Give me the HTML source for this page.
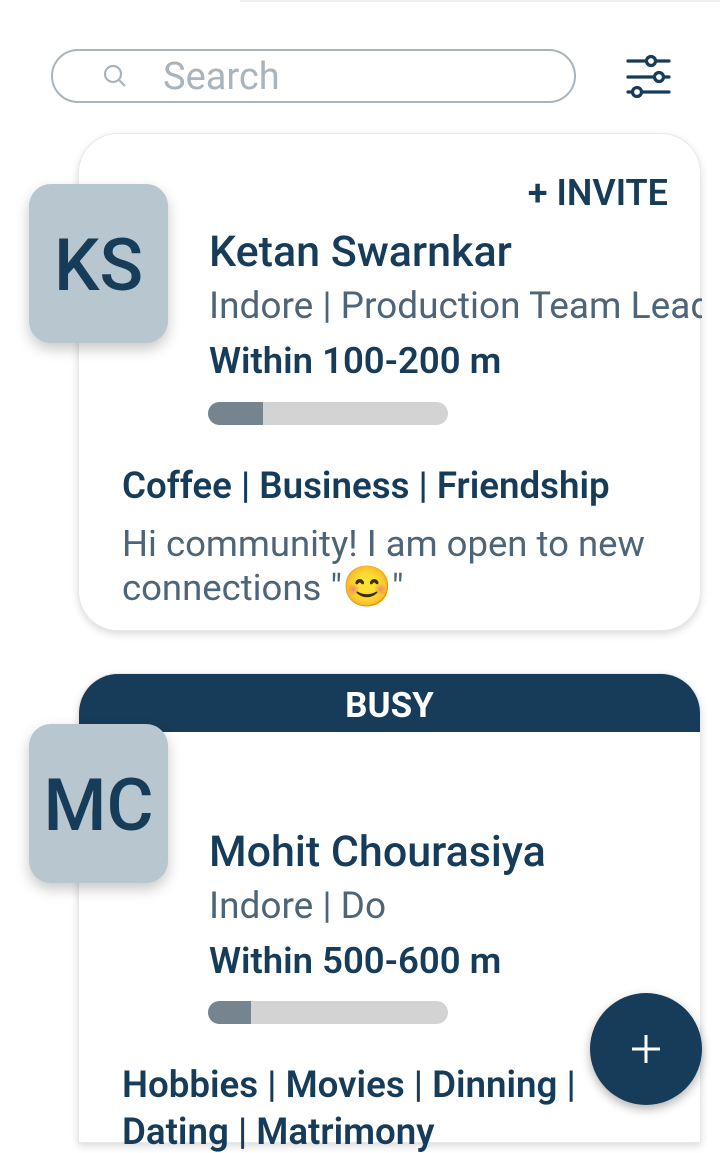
<!DOCTYPE html>
<html><head><meta charset="utf-8"><style>
*{margin:0;padding:0;box-sizing:border-box}
body{width:720px;height:1128px;overflow:hidden;background:#fff;font-family:"Roboto","Liberation Sans",sans-serif;position:relative;color:#163c59}
.abs{position:absolute;white-space:nowrap;line-height:1}
.card{position:absolute;left:78px;width:623px;background:#fff;border:1px solid #e6e9ec;box-shadow:0 3px 8px rgba(0,0,0,.15);overflow:hidden}
.av{position:absolute;left:29px;width:139px;height:159px;border-radius:22px;background:#b8c6d0;box-shadow:0 6px 14px rgba(0,0,0,.22);color:#163c59;font-size:72px;font-weight:500;display:flex;align-items:center;justify-content:center;padding-top:4px}
.name{font-size:43px;font-weight:500}
.sub{font-size:37px;color:#4e6577}
.dist{font-size:36.5px;font-weight:600}
.bar{position:absolute;left:208px;width:240px;height:23px;border-radius:12px;background:#d3d3d3;overflow:hidden}
.bar i{display:block;height:100%;background:#76848f}
.tags{font-size:36.7px;font-weight:600}
.txt{font-size:36.5px;color:#4e6577;line-height:43px}
</style></head><body>
<div class="abs" style="left:240px;top:0;width:480px;height:2px;background:#eef0f2"></div>
<div class="abs" style="left:51px;top:49px;width:525px;height:54px;border:2px solid #a9b4bc;border-radius:27px"></div>
<svg class="abs" style="left:102px;top:63px" width="26" height="26" viewBox="0 0 26 26"><circle cx="11" cy="11" r="8" fill="none" stroke="#a9b4bc" stroke-width="2.2"/><line x1="17" y1="17" x2="23" y2="23" stroke="#a9b4bc" stroke-width="2.2"/></svg>
<div class="abs" style="left:163px;top:58px;font-size:38px;color:#a9b4bc">Search</div>
<svg class="abs" style="left:626px;top:53px" width="46" height="48" viewBox="0 0 46 48" fill="none" stroke="#163c59" stroke-width="3.2" stroke-linecap="round"><line x1="2" y1="8" x2="20" y2="8"/><line x1="30" y1="8" x2="43" y2="8"/><circle cx="25" cy="8" r="4.5"/><line x1="2" y1="24" x2="28" y2="24"/><line x1="38" y1="24" x2="43" y2="24"/><circle cx="33" cy="24" r="4.5"/><line x1="2" y1="39" x2="6" y2="39"/><line x1="16" y1="39" x2="43" y2="39"/><circle cx="11" cy="39" r="4.5"/></svg>

<div class="card" style="top:133px;height:498px;border-radius:40px"></div>
<div class="av" style="top:184px">KS</div>
<div class="abs" style="right:52px;top:175px;font-size:36px;font-weight:600">+ INVITE</div>
<div class="abs name" style="left:209px;top:231px">Ketan Swarnkar</div>
<div class="abs" style="left:209px;top:288px;width:493px;overflow:hidden"><span class="sub">Indore | Production Team Lead</span></div>
<div class="abs dist" style="left:209px;top:343px">Within 100-200 m</div>
<div class="bar" style="top:402px"><i style="width:55px"></i></div>
<div class="abs tags" style="left:122px;top:468px">Coffee | Business | Friendship</div>
<div class="abs txt" style="left:122px;top:522px">Hi community! I am open to new<br>connections "<span style="font-family:'Noto Color Emoji','DejaVu Sans',sans-serif;font-size:40px">😊</span>"</div>

<div class="card" style="top:673px;height:470px;border-radius:40px 40px 0 0"><div style="height:58px;background:#163c59;color:#fff;font-size:35px;font-weight:700;text-align:center;line-height:64px">BUSY</div></div>
<div class="av" style="top:724px">MC</div>
<div class="abs name" style="left:209px;top:831px">Mohit Chourasiya</div>
<div class="abs sub" style="left:209px;top:888px">Indore | Do</div>
<div class="abs dist" style="left:209px;top:943px">Within 500-600 m</div>
<div class="bar" style="top:1001px"><i style="width:43px"></i></div>
<div class="abs tags" style="left:122px;top:1067px">Hobbies | Movies | Dinning |</div>
<div class="abs tags" style="left:122px;top:1114px">Dating | Matrimony</div>

<div class="abs" style="left:590px;top:993px;width:112px;height:112px;border-radius:50%;background:#163c59;box-shadow:0 4px 10px rgba(0,0,0,.3)"></div>
<svg class="abs" style="left:630px;top:1033px" width="32" height="32"><line x1="16" y1="2" x2="16" y2="30" stroke="#fff" stroke-width="3"/><line x1="2" y1="16" x2="30" y2="16" stroke="#fff" stroke-width="3"/></svg>
</body></html>
